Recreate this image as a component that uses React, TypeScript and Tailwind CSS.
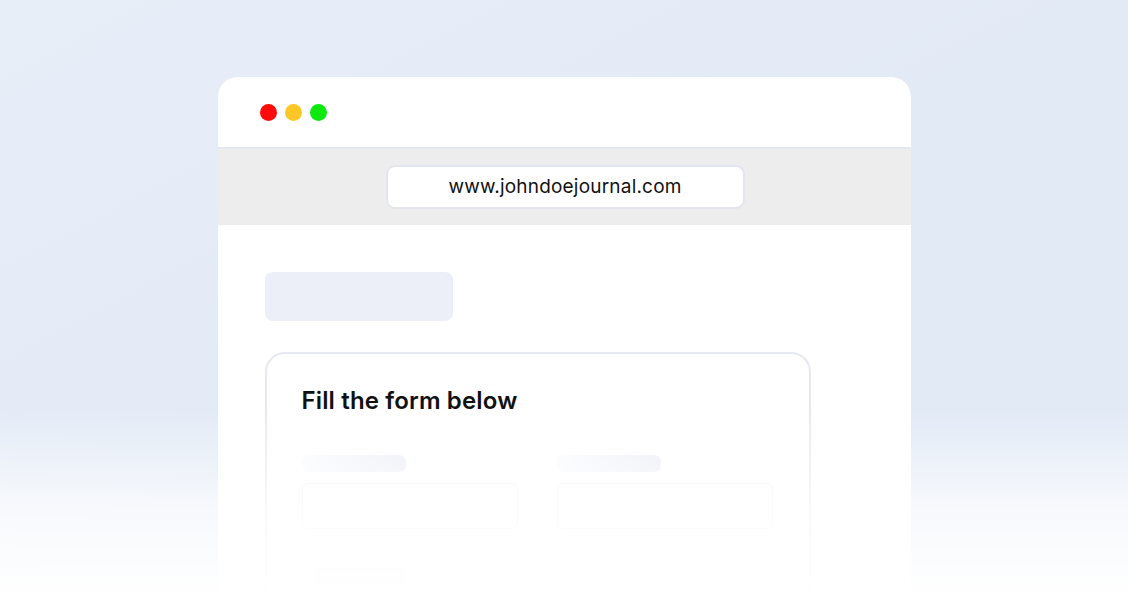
export default function App() {
  return (
    <div
      className="relative h-[600px] w-[1128px] overflow-hidden bg-[#e2eaf6]"
      style={{ fontFamily: 'Inter, "Noto Sans", sans-serif' }}
    >
      <div className="absolute inset-0 bg-gradient-to-br from-[#e8eef8] via-transparent to-transparent" />

      {/* browser window */}
      <div className="relative mx-auto mt-[77px] h-[600px] w-[693px] overflow-hidden rounded-t-[20px] bg-white">
        <div className="flex h-[72px] items-center gap-[8px] border-b-2 border-[#e3e8f1] pl-[42px] pt-[1px]">
          <span className="h-[17px] w-[17px] rounded-full bg-[#ff0b0b]" />
          <span className="h-[17px] w-[17px] rounded-full bg-[#fdc827]" />
          <span className="h-[17px] w-[17px] rounded-full bg-[#0de80f]" />
        </div>
        <div className="flex h-[76px] items-center justify-center bg-[#ededed] pl-[2px]">
          <div className="flex h-[44px] w-[359px] items-center justify-center rounded-[9px] border-2 border-[#e3e6ee] bg-white text-[19px] tracking-[0.2px] text-[#111]">
            www.johndoejournal.com
          </div>
        </div>

        <div className="px-[47px] pt-[47px]">
          <div className="h-[49px] w-[188px] rounded-[8px] bg-[#eceff7]" />

          <div className="mt-[31px] w-[546px] rounded-t-[20px] border-2 border-[#e6e9f4] bg-white px-[35px] pt-[32px] pb-[40px]">
            <h2 className="text-[24px] font-semibold leading-[30px] tracking-[0.15px] text-[#111]">
              Fill the form below
            </h2>

            <div className="mt-[39px] grid grid-cols-2 gap-x-[39px]">
              {[0, 1].map((i) => (
                <div key={i}>
                  <div className="h-[17px] w-[104px] rounded-[7px] bg-gradient-to-r from-[#fafbfe] to-[#eceef7]" />
                  <div className="mt-[11px] h-[46px] w-[216px] rounded-[6px] border border-[#eef0f8]" />
                </div>
              ))}
            </div>

            <div className="mt-[39px] ml-[12px] h-[17px] w-[92px] rounded-[7px] bg-[#eceef7]" />
          </div>
        </div>
      </div>

      {/* bottom fade */}
      <div className="pointer-events-none absolute inset-x-0 bottom-0 h-[190px] bg-gradient-to-b from-transparent via-white/70 to-white" />
    </div>
  );
}
